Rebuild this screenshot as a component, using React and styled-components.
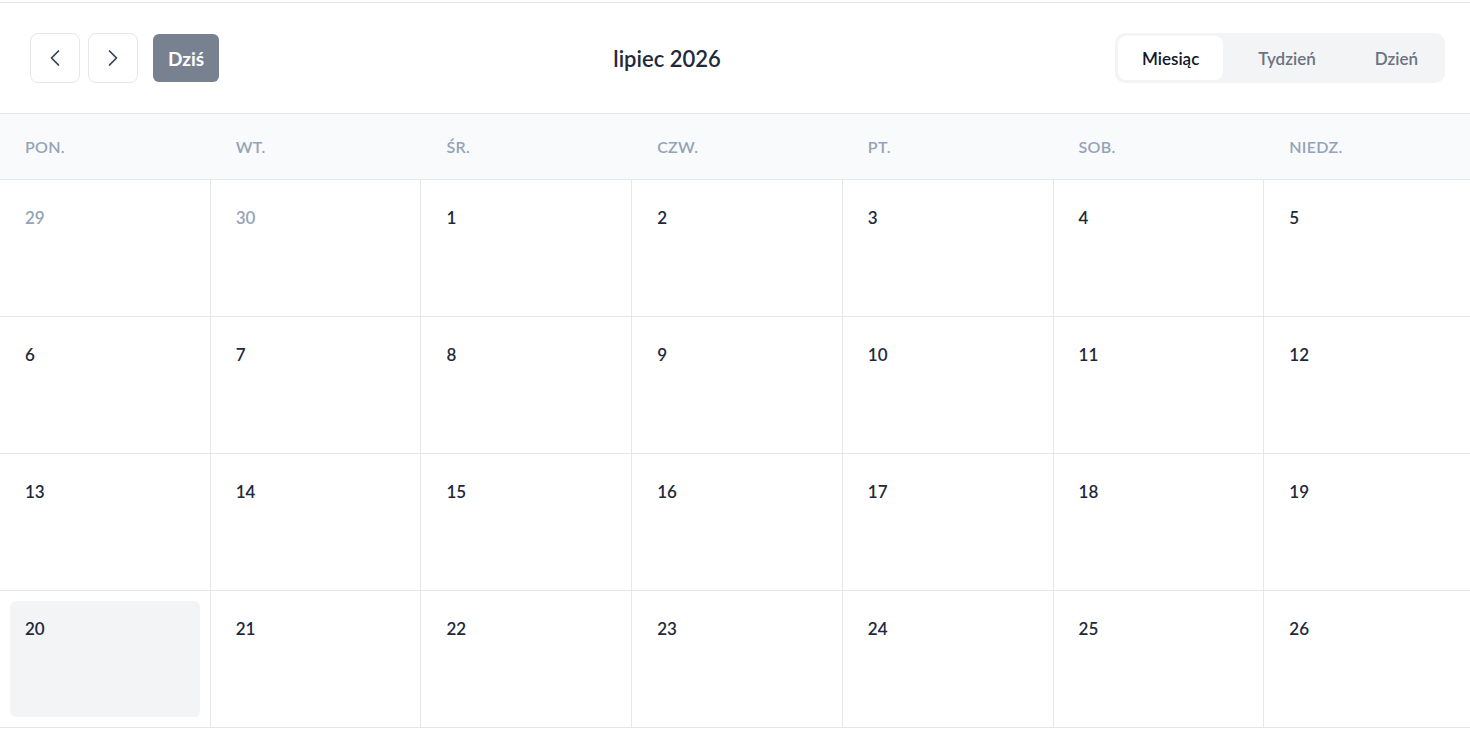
import React from "react";
import styled, { createGlobalStyle } from "styled-components";
import { ChevronLeft, ChevronRight } from "lucide-react";

const GlobalStyle = createGlobalStyle`
  html, body { margin: 0; padding: 0; background: #ffffff; overflow-x: hidden; }
  body { font-family: "Lato", "Noto Sans", sans-serif; color: #1e293b; }
  * { box-sizing: border-box; }
`;

const Page = styled.div`
  padding-top: 2px;
  overflow: hidden;
`;

const Calendar = styled.section`
  border-top: 1px solid #e5e7eb;
`;

const Toolbar = styled.header`
  height: 111px;
  display: flex;
  justify-content: space-between;
  align-items: center;
  padding: 0 25px 0 30px;
  border-bottom: 1px solid #e5e7eb;
`;

const NavGroup = styled.div`
  display: flex;
  align-items: center;
  gap: 8px;
`;

const IconButton = styled.button`
  width: 50px;
  height: 50px;
  border: 1px solid #e5e7eb;
  border-radius: 8px;
  background: #ffffff;
  color: #334155;
  display: flex;
  align-items: center;
  justify-content: center;
  padding: 0;
  cursor: pointer;
`;

const TodayButton = styled.button`
  margin-left: 7px;
  height: 48px;
  padding: 0 15px;
  border: none;
  border-radius: 6px;
  background: #778190;
  color: #ffffff;
  font-family: inherit;
  font-size: 19px;
  font-weight: 700;
  cursor: pointer;
`;

const Title = styled.h2`
  margin: 0;
  font-size: 22px;
  font-weight: 600;
  color: #1e293b;
`;

const Segmented = styled.div`
  display: flex;
  gap: 11px;
  padding: 3px;
  border-radius: 10px;
  background: #f3f4f6;
`;

const Segment = styled.button`
  height: 44px;
  padding: 0 24px;
  border: none;
  border-radius: 8px;
  background: ${(p) => (p.$active ? "#ffffff" : "transparent")};
  color: ${(p) => (p.$active ? "#111827" : "#6b7280")};
  font-family: inherit;
  font-size: 17px;
  font-weight: 600;
  cursor: pointer;
`;

const Columns = styled.div`
  display: grid;
  grid-template-columns: repeat(7, 1fr);
  width: calc(100% + 5px);
`;

const WeekHeader = styled(Columns)`
  height: 66px;
  background: #f9fafb;
  border-bottom: 1px solid #e5e7eb;
`;

const WeekdayLabel = styled.div`
  display: flex;
  align-items: center;
  padding-left: 25px;
  font-size: 16px;
  font-weight: 600;
  color: #94a3b8;
  text-transform: uppercase;
  letter-spacing: 0.3px;
`;

const Grid = styled(Columns)`
  grid-auto-rows: 137px;
`;

const Cell = styled.div`
  padding: 10px;
  border-right: ${(p) => (p.$last ? "none" : "1px solid #e5e7eb")};
  border-bottom: 1px solid #e5e7eb;
`;

const DayBox = styled.div`
  height: 100%;
  padding: 16px 15px;
  border-radius: 6px;
  background: ${(p) => (p.$today ? "#f3f4f6" : "transparent")};
`;

const DayNumber = styled.span`
  font-size: 17px;
  line-height: 24px;
  font-weight: 600;
  color: ${(p) => (p.$muted ? "#94a3b8" : "#1e293b")};
`;

const weekdays = ["pon.", "wt.", "śr.", "czw.", "pt.", "sob.", "niedz."];

const days = [
  { d: 29, muted: true },
  { d: 30, muted: true },
  ...Array.from({ length: 26 }, (_, i) => ({ d: i + 1 })),
];

export default function App() {
  return (
    <Page>
      <GlobalStyle />
      <Calendar>
        <Toolbar>
          <NavGroup>
            <IconButton aria-label="Poprzedni">
              <ChevronLeft size={28} strokeWidth={1.5} />
            </IconButton>
            <IconButton aria-label="Następny">
              <ChevronRight size={28} strokeWidth={1.5} />
            </IconButton>
            <TodayButton>Dziś</TodayButton>
          </NavGroup>
          <Title>lipiec 2026</Title>
          <Segmented>
            <Segment $active>Miesiąc</Segment>
            <Segment>Tydzień</Segment>
            <Segment>Dzień</Segment>
          </Segmented>
        </Toolbar>
        <WeekHeader>
          {weekdays.map((w) => (
            <WeekdayLabel key={w}>{w}</WeekdayLabel>
          ))}
        </WeekHeader>
        <Grid>
          {days.map((day, i) => (
            <Cell key={i} $last={i % 7 === 6}>
              <DayBox $today={day.d === 20 && !day.muted}>
                <DayNumber $muted={day.muted}>{day.d}</DayNumber>
              </DayBox>
            </Cell>
          ))}
        </Grid>
      </Calendar>
    </Page>
  );
}
